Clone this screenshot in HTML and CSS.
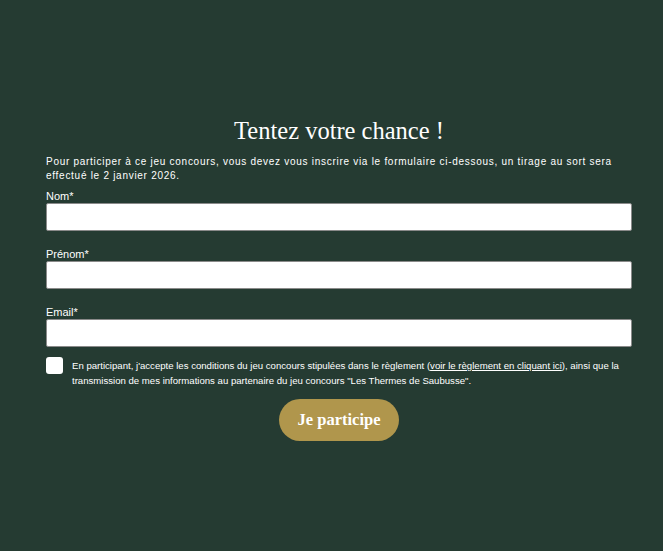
FILE: index.html
```html
<!DOCTYPE html>
<html lang="fr">
  <head>
    <meta charset="UTF-8" />
    <meta name="viewport" content="width=device-width, initial-scale=1.0" />
    <title>Jeu concours</title>
    <link rel="stylesheet" href="styles.css">
  </head>
  <body>
    <div class="wrap">
      <h1 class="title">Tentez votre chance !</h1>
      <p class="intro">Pour participer à ce jeu concours, vous devez vous inscrire via le formulaire ci-dessous, un tirage au sort sera effectué le 2 janvier 2026.</p>
      <form class="form">
        <div class="field">
          <label for="nom">Nom*</label>
          <input id="nom" type="text" />
        </div>
        <div class="field">
          <label for="prenom">Prénom*</label>
          <input id="prenom" type="text" />
        </div>
        <div class="field">
          <label for="email">Email*</label>
          <input id="email" type="email" />
        </div>
        <div class="consent">
          <span class="box"></span>
          <p>En participant, j'accepte les conditions du jeu concours stipulées dans le règlement (<a href="#">voir le règlement en cliquant ici</a>), ainsi que la transmission de mes informations au partenaire du jeu concours "Les Thermes de Saubusse".</p>
        </div>
        <div class="actions">
          <button type="button" class="btn">Je participe</button>
        </div>
      </form>
    </div>
  </body>
</html>
```
FILE: styles.css
```css
* {
  box-sizing: border-box;
}
body {
  margin: 0;
  background-color: #253b32;
  color: #fff;
  font-family: "Liberation Sans", Arial, sans-serif;
}
.wrap {
  padding: 115px 31px 0 46px;
}
.title {
  margin: 0;
  font-family: "Liberation Serif", "Times New Roman", serif;
  font-weight: normal;
  font-size: 24.5px;
  line-height: 32px;
  text-align: center;
}
.intro {
  margin: 8px 0 0;
  font-size: 10px;
  line-height: 14px;
  letter-spacing: 0.72px;
}
.form {
  margin-top: 6px;
}
.field {
  display: flex;
  flex-direction: column;
  margin-bottom: 16px;
}
.field label {
  font-size: 11px;
  line-height: 14px;
}
.field input {
  height: 28px;
  border: 1px solid #8a8a8a;
  border-radius: 2px;
  background: #fff;
}
.consent {
  display: flex;
  gap: 9px;
  margin-top: -5px;
}
.box {
  flex: none;
  width: 17px;
  height: 17px;
  margin-top: -1px;
  background: #fff;
  border-radius: 3px;
}
.consent p {
  margin: 0;
  font-size: 9.6px;
  line-height: 15px;
}
.consent a {
  color: #fff;
}
.actions {
  display: flex;
  justify-content: center;
  margin-top: 11px;
}
.btn {
  width: 120px;
  height: 42px;
  border: 0;
  border-radius: 21px;
  background-color: #b0964c;
  color: #fff;
  font-family: "Liberation Serif", "Times New Roman", serif;
  font-weight: bold;
  font-size: 16.5px;
}
```
